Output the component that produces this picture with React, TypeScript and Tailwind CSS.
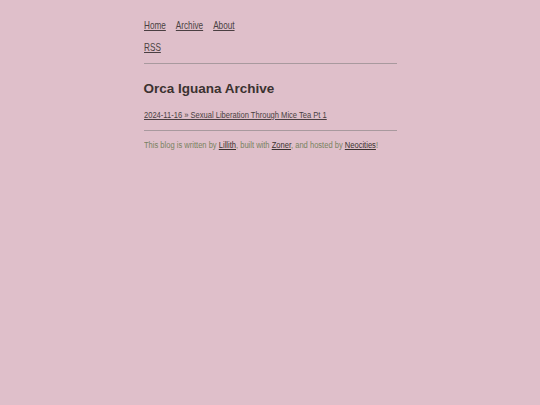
import React from "react";

export default function App() {
  const sans = { fontFamily: '"Liberation Sans", Arial, sans-serif' };
  return (
    <div className="min-h-[405px] w-full bg-[#dfbfca]" style={sans}>
      <div className="mx-auto w-[253px] pt-[19px]">
        <nav className="flex w-[324px] origin-left scale-x-[0.78] gap-x-[12.8px] text-[10.5px] leading-[12px] text-[#4a3f42]">
          <a href="#" className="underline">Home</a>
          <a href="#" className="underline">Archive</a>
          <a href="#" className="underline">About</a>
        </nav>
        <div className="mt-[10px] w-[324px] origin-left scale-x-[0.78] text-[10.5px] leading-[12px] text-[#4a3f42]">
          <a href="#" className="underline">RSS</a>
        </div>
        <hr className="mt-[10px] border-0 border-t border-[#a8999e]" />
        <h1 className="mt-[17px] text-[13.5px] font-bold leading-[16px] text-[#3b3230]">
          Orca Iguana Archive
        </h1>
        <div className="mt-[12px] w-[324px] origin-left scale-x-[0.78] text-[9.7px] leading-[12px] text-[#4a3f42]">
          <a href="#" className="underline">2024-11-16 » Sexual Liberation Through Mice Tea Pt 1</a>
        </div>
        <hr className="mt-[9px] border-0 border-t border-[#a8999e]" />
        <p className="mt-[8px] w-[324px] origin-left scale-x-[0.78] text-[9.7px] leading-[12px] text-[#78825f]">
          This blog is written by <a href="#" className="text-[#3b3230] underline">Lillith</a>, built with{" "}
          <a href="#" className="text-[#3b3230] underline">Zoner</a>, and hosted by{" "}
          <a href="#" className="text-[#3b3230] underline">Neocities</a>!
        </p>
      </div>
    </div>
  );
}
